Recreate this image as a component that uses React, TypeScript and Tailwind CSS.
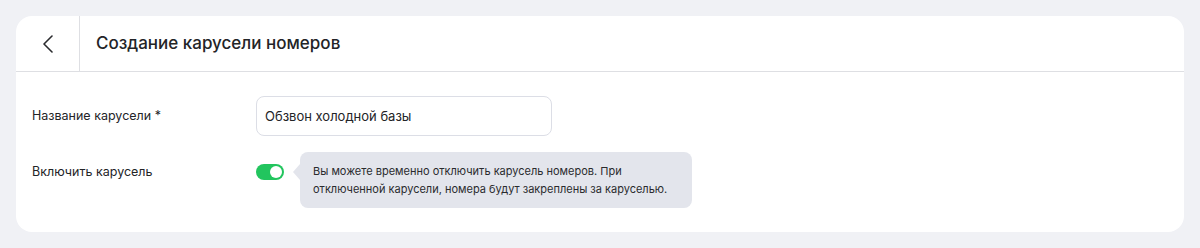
export default function App() {
  return (
    <div className="min-h-[248px] bg-[#f0f1f5] p-4 font-['Inter',sans-serif] text-[#232427]">
      <div className="rounded-2xl bg-white">
        <div className="flex h-14 items-stretch border-b border-[#dedfe3]">
          <button className="flex w-16 items-center justify-center border-r border-[#dedfe3] text-[#2a2b2e]">
            <svg width="12" height="18" viewBox="0 0 12 18" fill="none">
              <path d="M10 1 L2 9 L10 17" stroke="currentColor" strokeWidth="1.6" strokeLinecap="round" strokeLinejoin="round" />
            </svg>
          </button>
          <h1 className="flex items-center pl-4 text-[17px] font-medium">Создание карусели номеров</h1>
        </div>

        <div className="flex flex-col gap-4 px-4 pt-6 pb-6">
          <div className="flex items-center">
            <label className="w-56 text-[12.5px]">Название карусели *</label>
            <input
              defaultValue="Обзвон холодной базы"
              className="h-10 w-[296px] rounded-lg border border-[#dcdee6] px-2 text-[13px] text-[#232427] outline-none"
            />
          </div>

          <div className="flex items-start">
            <label className="w-56 pt-[11px] text-[12.5px]">Включить карусель</label>
            <div className="flex items-start pt-3">
              <span className="relative flex h-4 w-7 items-center rounded-full bg-[#22c55e]">
                <span className="absolute right-[2px] h-3 w-3 rounded-full bg-white" />
              </span>
            </div>
            <div className="relative ml-4 w-[392px] rounded-lg bg-[#e3e5ec] px-[13px] py-[10px] text-[11px] leading-[18px] text-[#2a2b2e]">
              <span className="absolute top-[12px] -left-[7px] h-0 w-0 border-y-[8px] border-r-[7px] border-y-transparent border-r-[#e3e5ec]" />
              Вы можете временно отключить карусель номеров. При
              <br />
              отключенной карусели, номера будут закреплены за каруселью.
            </div>
          </div>
        </div>
      </div>
    </div>
  );
}
